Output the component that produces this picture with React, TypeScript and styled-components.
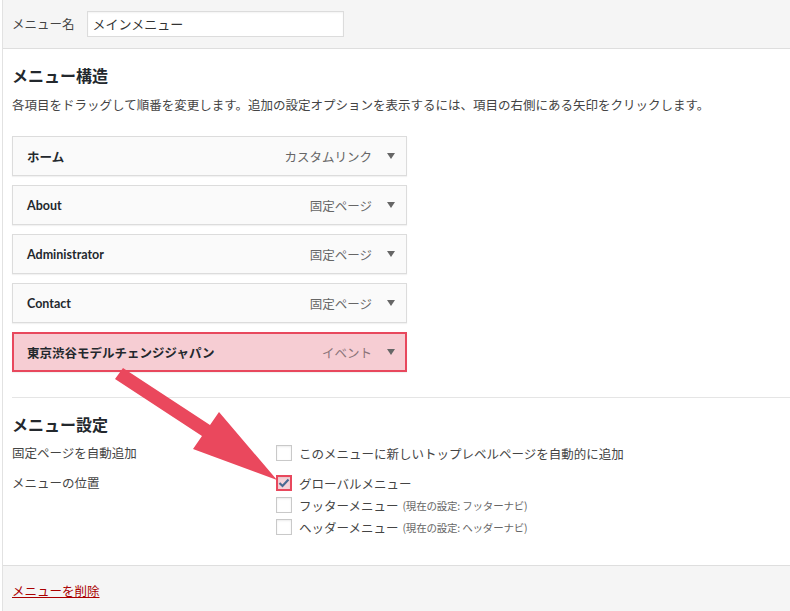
import React from "react";
import styled, { createGlobalStyle } from "styled-components";

const GlobalStyle = createGlobalStyle`
  html, body { margin: 0; padding: 0; background: #fff; overflow: hidden; }
  body {
    font-family: "Noto Sans CJK JP", "Noto Sans", sans-serif;
    color: #444;
    font-size: 12.5px;
  }
`;

const Page = styled.div`
  position: relative;
  width: 790px;
  height: 611px;
  padding-left: 2px;
  box-sizing: border-box;
`;

const Panel = styled.div`
  height: 100%;
  border-left: 1px solid #e2e2e2;
  display: flex;
  flex-direction: column;
`;

const Header = styled.div`
  height: 49px;
  box-sizing: border-box;
  background: #f5f5f5;
  border-bottom: 1px solid #dedede;
  display: flex;
  align-items: center;
  gap: 12px;
  padding: 0 9px 1px;
`;

const Label = styled.span`
  font-size: 12.5px;
  color: #444;
`;

const NameInput = styled.div`
  width: 257px;
  height: 26px;
  box-sizing: border-box;
  background: #fff;
  border: 1px solid #dcdcdc;
  box-shadow: inset 0 1px 2px rgba(0, 0, 0, 0.05);
  display: flex;
  align-items: center;
  padding: 0 5px;
  font-size: 13px;
  color: #333;
`;

const Body = styled.div`
  flex: 1;
  padding: 16px 0 0 9px;
`;

const SectionTitle = styled.h3<{ $top?: number }>`
  margin: ${(p) => p.$top ?? 0}px 0 0;
  font-size: 16px;
  line-height: 20px;
  font-weight: 700;
  color: #23282d;
`;

const Description = styled.p`
  margin: 11px 0 0;
  font-size: 12.5px;
  line-height: 18px;
  color: #444;
`;

const ItemList = styled.div`
  margin-top: 22px;
  display: flex;
  flex-direction: column;
  gap: 9px;
  width: 395px;
`;

const Item = styled.div<{ $active?: boolean }>`
  height: 40px;
  box-sizing: border-box;
  display: flex;
  align-items: center;
  padding: ${(p) => (p.$active ? "0 9px 0 13px" : "0 10px 0 14px")};
  background: ${(p) => (p.$active ? "#f6cdd3" : "#fafafa")};
  border: ${(p) => (p.$active ? "2px solid #e8485d" : "1px solid #dcdcdc")};
  box-shadow: 0 1px 1px rgba(0, 0, 0, 0.05);
`;

const ItemTitle = styled.span`
  flex: 1;
  font-family: "Lato", "Noto Sans CJK JP", sans-serif;
  font-weight: 700;
  font-size: 12.5px;
  color: #23282d;
`;

const ItemType = styled.span<{ $active?: boolean }>`
  font-size: 12.5px;
  color: ${(p) => (p.$active ? "#8a7378" : "#666")};
`;

const Toggle = styled.span`
  width: 10px;
  margin-left: 14px;
  display: flex;
  justify-content: center;
`;

const Separator = styled.div`
  margin-top: 25px;
  height: 1px;
  background: #e5e5e5;
`;

const Settings = styled.div`
  margin-top: 8px;
  display: grid;
  grid-template-columns: 264px 1fr;
  row-gap: 8px;
`;

const SettingLabel = styled.span`
  line-height: 22px;
  font-size: 12.5px;
  color: #444;
`;

const OptionGroup = styled.div`
  display: flex;
  flex-direction: column;
`;

const Option = styled.label`
  display: flex;
  align-items: center;
  gap: 7px;
  height: 22px;
  font-size: 12.5px;
  color: #444;
`;

const Box = styled.span<{ $checked?: boolean }>`
  width: 16px;
  height: 16px;
  box-sizing: border-box;
  display: flex;
  align-items: center;
  justify-content: center;
  background: ${(p) => (p.$checked ? "#f6d3d9" : "#fff")};
  border: ${(p) => (p.$checked ? "2px solid #e8485d" : "1px solid #c9c9c9")};
  box-shadow: inset 0 1px 2px rgba(0, 0, 0, 0.08);
`;

const Note = styled.span`
  font-size: 10.5px;
  color: #666;
  margin-left: -3px;
  letter-spacing: -0.2px;
`;

const Footer = styled.div`
  height: 46px;
  box-sizing: border-box;
  background: #f5f5f5;
  border-top: 1px solid #dedede;
  padding: 15px 9px 0;
`;

const DeleteLink = styled.a`
  color: #a00;
  text-decoration: underline;
  font-size: 12.5px;
  line-height: 18px;
`;

const Overlay = styled.svg`
  position: absolute;
  left: 0;
  top: 0;
  pointer-events: none;
`;

const items = [
  { title: "ホーム", type: "カスタムリンク" },
  { title: "About", type: "固定ページ" },
  { title: "Administrator", type: "固定ページ" },
  { title: "Contact", type: "固定ページ" },
  { title: "東京渋谷モデルチェンジジャパン", type: "イベント", active: true },
];

const Caret = () => (
  <svg width="8" height="6" viewBox="0 0 8 6">
    <path d="M0 0 L8 0 L4 6 Z" fill="#666" />
  </svg>
);

const Check = () => (
  <svg width="12" height="10" viewBox="0 0 12 10">
    <path d="M1.5 5 L4.5 8 L10.5 1.5" fill="none" stroke="#4a6a93" strokeWidth="2.2" />
  </svg>
);

export default function App() {
  return (
    <>
      <GlobalStyle />
      <Page>
        <Panel>
          <Header>
            <Label>メニュー名</Label>
            <NameInput>メインメニュー</NameInput>
          </Header>
          <Body>
            <SectionTitle>メニュー構造</SectionTitle>
            <Description>
              各項目をドラッグして順番を変更します。追加の設定オプションを表示するには、項目の右側にある矢印をクリックします。
            </Description>
            <ItemList>
              {items.map((it) => (
                <Item key={it.title} $active={it.active}>
                  <ItemTitle>{it.title}</ItemTitle>
                  <ItemType $active={it.active}>{it.type}</ItemType>
                  <Toggle>
                    <Caret />
                  </Toggle>
                </Item>
              ))}
            </ItemList>
            <Separator />
            <SectionTitle $top={16}>メニュー設定</SectionTitle>
            <Settings>
              <SettingLabel>固定ページを自動追加</SettingLabel>
              <OptionGroup>
                <Option>
                  <Box />
                  このメニューに新しいトップレベルページを自動的に追加
                </Option>
              </OptionGroup>
              <SettingLabel>メニューの位置</SettingLabel>
              <OptionGroup>
                <Option>
                  <Box $checked>
                    <Check />
                  </Box>
                  グローバルメニュー
                </Option>
                <Option>
                  <Box />
                  フッターメニュー <Note>(現在の設定: フッターナビ)</Note>
                </Option>
                <Option>
                  <Box />
                  ヘッダーメニュー <Note>(現在の設定: ヘッダーナビ)</Note>
                </Option>
              </OptionGroup>
            </Settings>
          </Body>
          <Footer>
            <DeleteLink href="#">メニューを削除</DeleteLink>
          </Footer>
        </Panel>
        <Overlay width="790" height="611" viewBox="0 0 790 611">
          <polygon
            points="123,368 210,425 219,412 277,480 193,449 202,436 115,379"
            fill="#ea485d"
          />
        </Overlay>
      </Page>
    </>
  );
}
